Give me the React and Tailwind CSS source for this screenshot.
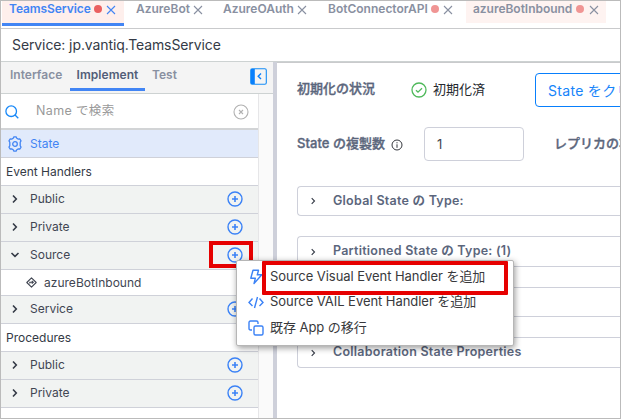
import React from 'react';

const CloseX = ({ className = '' }) => (
  <svg className={`h-[10px] w-[10px] shrink-0 ${className}`} viewBox="0 0 10 10" fill="none" stroke="currentColor" strokeWidth="1.1">
    <path d="M1 1l8 8M9 1l-8 8" />
  </svg>
);

const Plus = () => (
  <svg className="h-4 w-4 shrink-0 text-[#3b82f6]" viewBox="0 0 16 16" fill="none" stroke="currentColor" strokeWidth="1.4">
    <circle cx="8" cy="8" r="7" />
    <path d="M8 5v6M5 8h6" strokeWidth="1.6" />
  </svg>
);

const Chevron = ({ open }) => (
  <svg className="h-[10px] w-[10px] shrink-0 text-[#343a46]" viewBox="0 0 10 10" fill="none" stroke="currentColor" strokeWidth="1.6">
    <path d={open ? 'M1.5 3L5 6.3L8.5 3' : 'M3 1.5L6.3 5L3 8.5'} />
  </svg>
);

const GroupRow = ({ label, open }) => (
  <div className="flex h-7 shrink-0 items-center border-b border-[#cfd1d9] bg-[#f1f3f2] pb-[2px] pl-[9px] pr-[15px]">
    <Chevron open={open} />
    <span className="ml-[10px] flex-1 text-[12px] text-[#414652]">{label}</span>
    <Plus />
  </div>
);

const Heading = ({ label }) => (
  <div className="flex h-7 shrink-0 items-center border-b border-[#cfd1d9] pl-[5px] text-[12px] text-[#343a46]">{label}</div>
);

const Panel = ({ label, className }) => (
  <div className={`flex shrink-0 items-center rounded-l-[4px] border border-r-0 border-[#ced0da] pl-3 ${className}`}>
    <svg className="h-2 w-2 shrink-0 text-[#343a46]" viewBox="0 0 8 8" fill="none" stroke="currentColor" strokeWidth="1.1">
      <path d="M1.7 1.2L4.5 4L1.7 6.8" />
    </svg>
    {label && <span className="ml-[15px] whitespace-nowrap text-[12.5px] font-semibold tracking-[0.24px] text-[#5b667c]">{label}</span>}
  </div>
);

const Dot = ({ className }) => <span className={`h-[8px] w-[8px] shrink-0 rounded-full ${className}`} />;

export default function App() {
  return (
    <div className="relative flex h-[419px] w-[621px] flex-col overflow-hidden border border-[#bbbbbb] bg-white font-['Inter','Noto_Sans_CJK_JP',sans-serif]">
      <div className="flex h-7 shrink-0 border-b border-[#c9cacc] text-[12px] leading-[15px] font-semibold whitespace-nowrap text-[#8990a1]">
        <div className="ml-px flex h-[25px] w-[122px] shrink-0 border-b-[3px] border-[#4285f4] bg-[#feefec] pl-[7px] text-[#4285f4]">
          <span className="w-[85px] tracking-[-0.08px]">TeamsService</span>
          <Dot className="mt-[4px] bg-[#ea6060]" />
          <CloseX className="ml-[4px] mt-[4px]" />
        </div>
        <div className="ml-[12px] flex w-[88px] shrink-0">
          <span className="w-[57px]">AzureBot</span>
          <CloseX className="mt-[4px]" />
        </div>
        <div className="-ml-px flex w-[105px] shrink-0">
          <span className="w-[74px]">AzureOAuth</span>
          <CloseX className="mt-[4px]" />
        </div>
        <div className="flex w-[138px] shrink-0">
          <span className="w-[103px]">BotConnectorAPI</span>
          <Dot className="mt-[4px] bg-[#f09594]" />
          <CloseX className="ml-[4px] mt-[4px]" />
        </div>
        <div className="flex h-[22px] w-[140px] shrink-0 bg-[#fef3f1] pl-[7px]">
          <span className="w-[103px] tracking-[-0.03px]">azureBotInbound</span>
          <Dot className="mt-[4px] bg-[#f09594]" />
          <CloseX className="ml-[5px] mt-[4px]" />
        </div>
      </div>

      <div className="flex h-[33px] shrink-0 items-center border-b border-[#cdd2d2] pb-px pl-[11px] text-[14px] tracking-[-0.1px] text-[#343a46]">Service: jp.vantiq.TeamsService</div>

      <div className="flex min-h-0 flex-1">
        <div className="flex w-[272px] shrink-0 flex-col">
          <div className="flex h-8 shrink-0 border-b border-[#cdd2d2] bg-[#f4f4f4] pl-[9px] text-[12px] leading-[26px] font-semibold text-[#8990a1]">
            <span className="w-[60px]">Interface</span>
            <span className="flex h-[29px] w-[75px] justify-center border-b-[3px] border-[#4285f4] tracking-[0.05px] text-[#525e78]">Implement</span>
            <span className="ml-[7px] w-[98px]">Test</span>
            <svg className="mt-[6px] h-[17px] w-[17px] shrink-0" viewBox="0 0 17 17" fill="none">
              <rect x="0.7" y="0.7" width="15.6" height="15.6" rx="1.5" stroke="#168cf5" strokeWidth="1.1" />
              <path d="M1 1h3.8v15H1z" fill="#087ffc" />
              <path d="M11 5.5L8.2 8.3L11 11" stroke="#087ffc" strokeWidth="1.4" />
            </svg>
          </div>
          <div className="flex min-h-0 flex-1">
            <div className="flex w-[257px] shrink-0 flex-col">
              <div className="flex h-9 shrink-0 items-center border-b-2 border-[#d2d4d6] pt-px pr-[9px] pl-[4px]">
                <svg className="h-[14px] w-[14px] shrink-0" viewBox="0 0 14 14" fill="none" stroke="#1788f8" strokeWidth="1.3">
                  <circle cx="6.2" cy="6.2" r="5.3" />
                  <path d="M10 10l3.3 3.3" />
                </svg>
                <span className="ml-[17px] flex-1 text-[12.5px] tracking-[0.35px] text-[#999999]">Name で検索</span>
                <svg className="h-4 w-4 shrink-0" viewBox="0 0 16 16" fill="none" stroke="#b1b1b1" strokeWidth="1.1">
                  <circle cx="8" cy="8" r="7" />
                  <path d="M6 6l4 4M10 6l-4 4" />
                </svg>
              </div>
              <div className="flex h-7 shrink-0 items-center border-b border-[#cfd1d9] bg-[#e1eafb] pt-px pl-[6px] text-[12px] text-[#4285f4]">
                <svg className="mr-[7px] h-4 w-4 shrink-0" viewBox="0 0 16 16" fill="none" stroke="currentColor" strokeWidth="1.3" strokeLinejoin="round">
                  <path d="M6.2 2.3L6.9 .9h2.2l.7 1.4 1.5.8 1.6-.1 1.1 1.9-.8 1.4v3.4l.8 1.4-1.1 1.9-1.6-.1-1.5.8-.7 1.4H6.9l-.7-1.4-1.5-.8-1.6.1L2 11.1l.8-1.4V6.3L2 4.9 3.1 3l1.6.1z" />
                  <circle cx="8" cy="8" r="2.3" />
                </svg>
                State
              </div>
              <Heading label="Event Handlers" />
              <GroupRow label="Public" />
              <GroupRow label="Private" />
              <GroupRow label="Source" open />
              <div className="flex h-[26px] shrink-0 items-center border-b border-[#cfd1d9] pl-[25px] text-[12px] tracking-[0.02px] text-[#414652]">
                <svg className="mr-[7px] h-[11px] w-[11px] shrink-0" viewBox="0 0 11 11" fill="none" stroke="currentColor" strokeWidth="1.1">
                  <path d="M5.5 .8L10.2 5.5L5.5 10.2L.8 5.5z" strokeLinejoin="round" />
                  <path d="M3.8 6.5V5.2H7M5.8 3.8L7.3 5.2L5.8 6.6" />
                </svg>
                azureBotInbound
              </div>
              <GroupRow label="Service" />
              <Heading label="Procedures" />
              <GroupRow label="Public" />
              <GroupRow label="Private" />
            </div>
            <div className="w-[15px] border-l border-[#e6e6e8] bg-[#fafafa]" />
          </div>
        </div>
        <div className="w-1 shrink-0 bg-[#ced0da]" />
        <div className="flex min-w-0 flex-1 flex-col overflow-hidden border-t border-[#c9cacc] pl-[20px] whitespace-nowrap">
          <div className="mt-[10px] flex h-[34px] shrink-0 items-center">
            <span className="w-[114px] shrink-0 pb-[2px] text-[13px] font-medium text-[#5b667c] [-webkit-text-stroke:0.35px_#5b667c]">初期化の状況</span>
            <svg className="h-4 w-4 shrink-0" viewBox="0 0 16 16" fill="none" stroke="#4fb95b" strokeWidth="1.3">
              <circle cx="8" cy="8" r="7" />
              <path d="M5 8.2l2 2 4-4" />
            </svg>
            <span className="ml-[6px] w-[102px] shrink-0 pb-px text-[13px] text-[#25282e]">初期化済</span>
            <span className="flex h-[34px] w-[110px] shrink-0 items-center rounded-[4px] border border-[#087ffc] pl-[12px] text-[14px] tracking-[0.3px] text-[#1684fa]">State をクリア</span>
          </div>
          <div className="mt-[20px] flex h-[34px] shrink-0 items-center">
            <span className="w-[94px] shrink-0 text-[13px] font-medium tracking-[0.05px] text-[#5b667c] [-webkit-text-stroke:0.35px_#5b667c]">State の複製数</span>
            <svg className="mt-[2px] h-[12px] w-[12px] shrink-0" viewBox="0 0 12 12" fill="none" stroke="#33363c" strokeWidth="1">
              <circle cx="6" cy="6" r="5" />
              <path d="M6 5.3v3.5M6 3.2v1.1" />
            </svg>
            <span className="ml-[21px] flex h-[34px] w-[100px] shrink-0 items-center rounded-[4px] border border-[#ced0da] pt-px pl-[12px] text-[13px] text-[#444750]">1</span>
            <span className="ml-[30px] text-[13px] font-medium text-[#5b667c] [-webkit-text-stroke:0.35px_#5b667c]">レプリカの状況</span>
          </div>
          <Panel className="mt-[25px] h-[30px]" label="Global State の Type:" />
          <Panel className="mt-[20px] h-[31px]" label="Partitioned State の Type: (1)" />
          <Panel className="mt-[20px] h-[30px]" />
          <Panel className="mt-[20px] h-[31px]" label="Collaboration State Properties" />
        </div>
      </div>

      <div className="absolute top-[240px] left-[208px] h-[27px] w-[44px] border-[4px] border-[#e60000]" />
      <div className="absolute top-[259px] left-[235px] flex h-[86px] w-[278px] flex-col rounded-[2px] border border-[#b6b6b6] bg-white pt-[3px] pl-[11px] text-[13px] tracking-[-0.05px] whitespace-nowrap text-[#38393c] shadow-[1px_2px_6px_rgba(0,0,0,0.4)]">
        <div className="flex h-[26px] items-center">
          <svg className="mr-[6px] h-4 w-4 shrink-0" viewBox="0 0 16 16" fill="none" stroke="#3b82f6" strokeWidth="1.4" strokeLinejoin="round">
            <path d="M5 1.2H10.5L9.3 5.8H13.8L6 14.6L7.3 9.3H2.8z" />
          </svg>
          Source Visual Event Handler を追加
        </div>
        <div className="flex h-[25px] items-center pb-px">
          <svg className="mr-[6px] h-4 w-4 shrink-0" viewBox="0 0 16 16" fill="none" stroke="#3b82f6" strokeWidth="1.4">
            <path d="M4.5 4.5L1 8.5L4.5 12M11.5 4.5L15 8.5L11.5 12M9.5 3L6.5 14" />
          </svg>
          Source VAIL Event Handler を追加
        </div>
        <div className="flex h-[26px] items-center">
          <svg className="mr-[6px] h-4 w-4 shrink-0" viewBox="0 0 16 16" fill="none" stroke="#3b82f6" strokeWidth="1.4">
            <rect x="6" y="6" width="9" height="9" rx="1.5" />
            <path d="M4 10H2.5Q1 10 1 8.5V2.5Q1 1 2.5 1H8.5Q10 1 10 2.5V4" />
          </svg>
          既存 App の移行
        </div>
      </div>
      <div className="absolute top-[260px] left-[261px] h-[34px] w-[246px] rounded-[1px] border-[4px] border-[#e60000]" />
    </div>
  );
}
